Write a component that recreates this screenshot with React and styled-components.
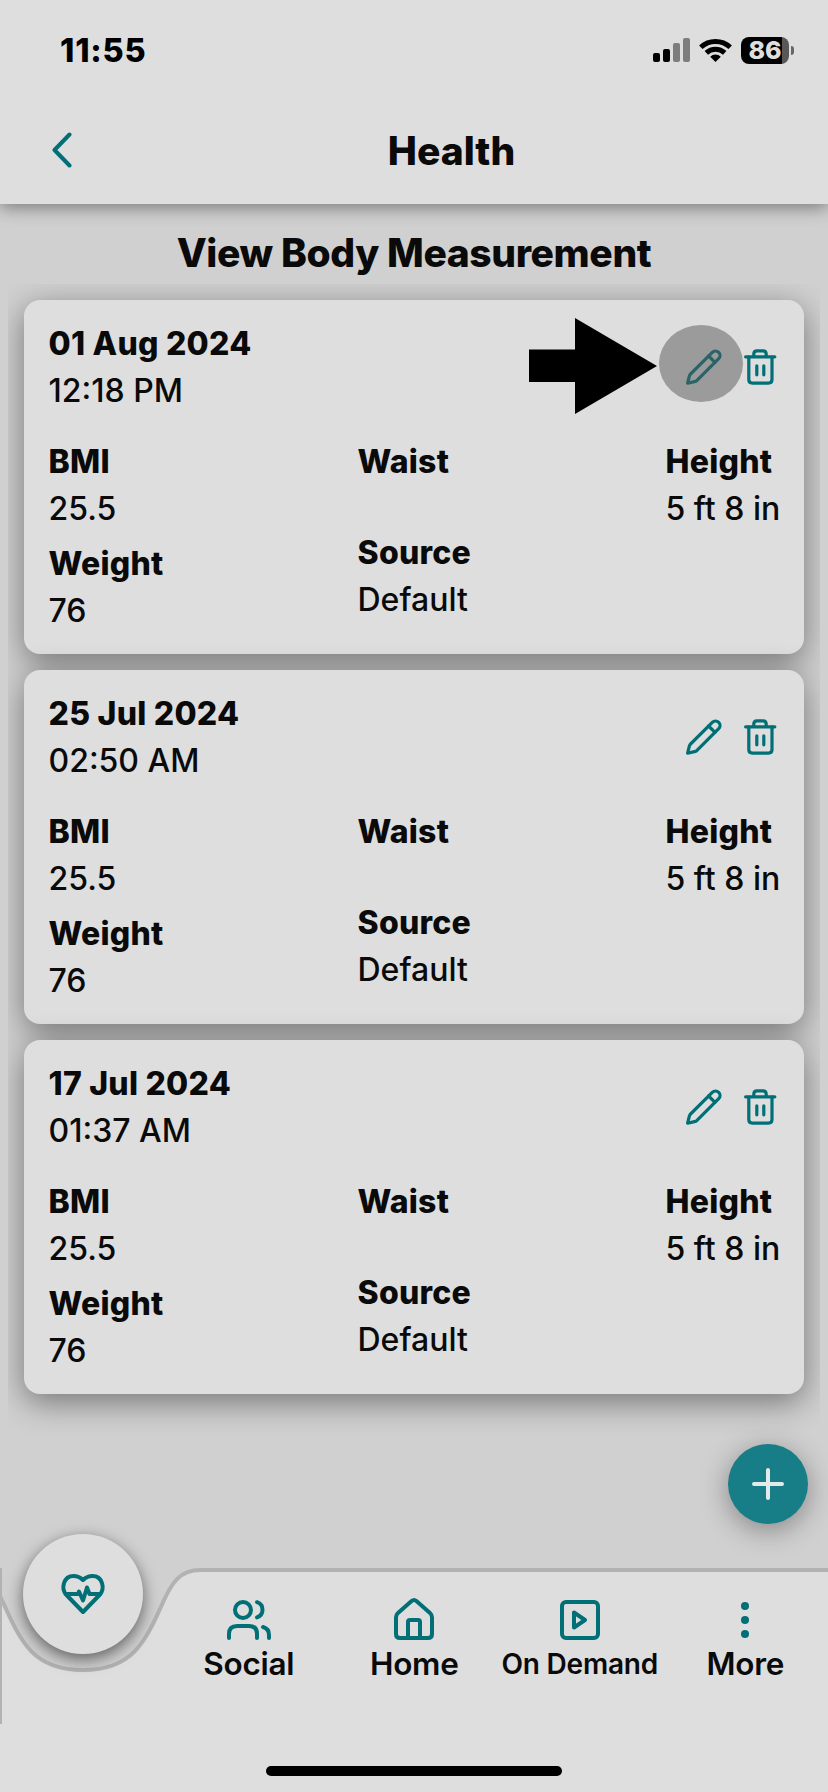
import React from 'react'
import styled, { createGlobalStyle } from 'styled-components'

const teal = '#006f76'

const GlobalStyle = createGlobalStyle`
  * {
    box-sizing: border-box;
  }
  body {
    margin: 0;
    background-color: #d0d0d0;
    color: #0a0a0a;
    font-family: Inter, 'Liberation Sans', sans-serif;
  }
  h1, h2, p {
    margin: 0;
  }
`

const Screen = styled.div`
  display: flex;
  flex-direction: column;
  width: 828px;
  height: 1792px;
  background-color: #d0d0d0;
  overflow: hidden;
  position: relative;
`
const Top = styled.header`
  height: 204px;
  flex: none;
  background-color: #dedede;
  box-shadow: 0 4px 16px rgba(0, 0, 0, 0.4);
`
const StatusBar = styled.div`
  display: flex;
  align-items: center;
  justify-content: space-between;
  height: 100px;
  padding: 0 34px 0 60px;
`
const Time = styled.div`
  font-size: 32.5px;
  font-weight: 800;
  letter-spacing: 0.8px;
  color: #000;
`
const StatusIcons = styled.div`
  display: flex;
  align-items: center;
  gap: 9px;
`
const Battery = styled.div`
  display: flex;
  align-items: center;
  gap: 2px;
`
const Charge = styled.div`
  display: flex;
  align-items: center;
  justify-content: center;
  width: 48px;
  height: 27px;
  border-radius: 8px;
  background: linear-gradient(to right, #000 41px, #585858 41px);
  color: #dedede;
  font-size: 25px;
  font-weight: 800;
  line-height: 27px;
`
const Nub = styled.div`
  width: 3px;
  height: 9px;
  border-radius: 0 4px 4px 0;
  background-color: #666;
`
const TitleBar = styled.div`
  display: grid;
  grid-template-columns: 75px 1fr 0px;
  align-items: center;
  height: 100px;
`
const Back = styled.div`
  display: flex;
  justify-content: flex-end;
`
const Title = styled.h1`
  text-align: center;
  font-size: 39px;
  font-weight: 800;
`
const PageTitle = styled.h2`
  height: 80px;
  flex: none;
  padding-top: 25px;
  text-align: center;
  font-size: 39px;
  line-height: 47px;
  font-weight: 800;
  letter-spacing: -0.4px;
`
const List = styled.div`
  display: flex;
  flex-direction: column;
  gap: 16px;
  flex: none;
  height: 1152px;
  margin: 0 8px;
  padding: 16px;
  overflow: hidden;
`
const Card = styled.div`
  height: 354px;
  flex: none;
  padding: 20px 24px 20px 24.5px;
  border-radius: 16px;
  background-color: #dedede;
  box-shadow: 0 8px 32px rgba(0, 0, 0, 0.44);
`
const CardHead = styled.div`
  display: flex;
  justify-content: space-between;
  height: 118px;
`
const Label = styled.p`
  font-size: 32px;
  line-height: 47px;
  font-weight: 800;
  letter-spacing: 0.25px;
  white-space: nowrap;
`
const Value = styled.p`
  font-size: 32px;
  line-height: 47px;
  font-weight: 500;
  min-height: 36px;
  white-space: nowrap;
`
const Actions = styled.div`
  display: flex;
  gap: 16px;
  height: 40px;
  margin-top: 27px;
`
const Action = styled.div`
  position: relative;
  width: 40px;
  height: 40px;
`
const Stats = styled.div`
  display: grid;
  grid-template-columns: 309px 308px auto;
`
const Column = styled.div`
  display: flex;
  flex-direction: column;
  gap: 8px;
`
// grey spot over the edit button, with the arrow pointing to it
const Spot = styled.div`
  position: absolute;
  left: -25px;
  top: -22px;
  width: 84px;
  height: 77px;
  border-radius: 50%;
  background-color: rgba(88, 88, 88, 0.5);
`
const Pointer = styled.svg`
  position: absolute;
  left: -155px;
  top: -29px;
`
const Icon = styled.svg`
  display: block;
  flex: none;
  fill: none;
  stroke: ${(props) => props.$color || teal};
  stroke-width: ${(props) => props.$weight || 4};
  stroke-linecap: round;
  stroke-linejoin: round;
`
const AddButton = styled.div`
  position: absolute;
  right: 20px;
  top: 1444px;
  display: flex;
  align-items: center;
  justify-content: center;
  width: 80px;
  height: 80px;
  border-radius: 50%;
  background-color: #177d87;
  box-shadow: 0 6px 28px rgba(0, 0, 0, 0.36);
`
const Bottom = styled.footer`
  position: relative;
  display: flex;
  flex-direction: column;
  flex: none;
  height: 224px;
  margin-top: auto;
`
const BarShape = styled.svg`
  position: absolute;
  left: 0;
  top: 0;
`
const HealthButton = styled.div`
  position: absolute;
  left: 23px;
  top: -34px;
  display: flex;
  align-items: center;
  justify-content: center;
  width: 120px;
  height: 120px;
  border-radius: 50%;
  background-color: #dedede;
  box-shadow: 0 5px 16px rgba(0, 0, 0, 0.55);
`
const Nav = styled.nav`
  position: relative;
  display: flex;
  height: 198px;
  padding: 28px 0 0 166px;
`
const NavItem = styled.div`
  display: flex;
  flex: 1;
  flex-direction: column;
  align-items: center;
`
const NavLabel = styled.div`
  font-size: ${(props) => (props.$small ? 28 : 31.5)}px;
  line-height: 40px;
  font-weight: 600;
  letter-spacing: ${(props) => (props.$small ? -0.2 : -0.3)}px;
  white-space: nowrap;
`
const HomeIndicator = styled.div`
  position: relative;
  width: 296px;
  height: 10px;
  margin: 0 auto;
  border-radius: 5px;
  background-color: #000;
`

const Signal = () => (
  <svg width='37' height='24'>
    <rect x='0' y='15' width='7' height='9' rx='2' />
    <rect x='10' y='11' width='7' height='13' rx='2' />
    <rect x='20' y='5' width='7' height='19' rx='2' fill='#7d7d7d' />
    <rect x='30' y='0' width='7' height='24' rx='2' fill='#7d7d7d' />
  </svg>
)

const Wifi = () => (
  <svg width='33' height='24' fill='none' stroke='#000' strokeWidth='5'>
    <path d='M1.8 9.2 A21.5 21.5 0 0 1 31.2 9.2' />
    <path d='M7.3 14.8 A13.5 13.5 0 0 1 25.7 14.8' />
    <path d='M16.5 24 L11.2 18.7 A7.5 7.5 0 0 1 21.8 18.7 Z' fill='#000' stroke='none' />
  </svg>
)

const EditIcon = () => (
  <Icon width='40' height='40' $weight={3.2}>
    <path d='M28.3 5.3 L6.6 27 Q5.8 27.8 5.4 29 L3.6 36.2 L10.4 34.6 Q12 34.2 13 33.4 L34.7 11.7 A4.5 4.5 0 0 0 28.3 5.3 Z' />
    <path d='M24.6 9 L31 15.4' />
  </Icon>
)

const TrashIcon = () => (
  <Icon width='40' height='40' $weight={3.2}>
    <path d='M5.6 9.8 H34.8' />
    <path d='M13.8 9.5 V7 Q13.8 3.8 17 3.8 H23 Q26.2 3.8 26.2 7 V9.5' />
    <path d='M8.8 10 V32.6 Q8.8 36.2 12.4 36.2 H28.4 Q32 36.2 32 32.6 V10' />
    <path d='M16.8 18.8 V27.8 M23.8 18.8 V27.8' />
  </Icon>
)

const UsersIcon = () => (
  <Icon width='48' height='48'>
    <circle cx='18' cy='14' r='8' />
    <path d='M32 6.2 A8 8 0 0 1 32 21.4' />
    <path d='M4 42 V38 Q4 30 12 30 H24 Q32 30 32 38 V42' />
    <path d='M38 31 Q44 32.7 44 39 V42' />
  </Icon>
)

const HomeIcon = () => (
  <Icon width='48' height='48'>
    <path d='M6 38 V21.5 Q6 18.8 8 17 L21.6 5 Q24 3 26.4 5 L40 17 Q42 18.8 42 21.5 V38 Q42 42 38 42 H10 Q6 42 6 38 Z' />
    <path d='M18 42 V26 Q18 24 20 24 H28 Q30 24 30 26 V42' />
  </Icon>
)

const DemandIcon = () => (
  <Icon width='48' height='48'>
    <rect x='6' y='6' width='36' height='36' rx='4' />
    <path d='M18 16.5 V31.5 L29 24 Z' />
  </Icon>
)

const MoreIcon = () => (
  <Icon width='48' height='48'>
    <g fill={teal} stroke='none'>
      <circle cx='24' cy='10' r='4' />
      <circle cx='24' cy='24' r='4' />
      <circle cx='24' cy='38' r='4' />
    </g>
  </Icon>
)

const HeartIcon = () => (
  <Icon width='48' height='48'>
    <path d='M24 42 L7.5 25 C1.5 18.5 4.5 6 14.5 6 C18.5 6 21.5 7.5 24 10 C26.5 7.5 29.5 6 33.5 6 C43.5 6 46.5 18.5 40.5 25 Z' />
    <path d='M6.5 24 H19 L20 21.5 L24 30.5 L28 17.5 L30.5 24 H41.5' />
  </Icon>
)

const records = [
  { date: '01 Aug 2024', time: '12:18 PM', marked: true },
  { date: '25 Jul 2024', time: '02:50 AM' },
  { date: '17 Jul 2024', time: '01:37 AM' },
]

const Record = ({ date, time, marked }) => (
  <Card>
    <CardHead>
      <div>
        <Label>{date}</Label>
        <Value>{time}</Value>
      </div>
      <Actions>
        <Action>
          <EditIcon />
          {marked && (
            <>
              <Spot />
              <Pointer width='128' height='96'>
                <path d='M0 31.5 H46 V0 L128 48 L46 96 V64 H0 Z' />
              </Pointer>
            </>
          )}
        </Action>
        <Action>
          <TrashIcon />
        </Action>
      </Actions>
    </CardHead>
    <Stats>
      <Column>
        <div>
          <Label>BMI</Label>
          <Value>25.5</Value>
        </div>
        <div>
          <Label>Weight</Label>
          <Value>76</Value>
        </div>
      </Column>
      <Column>
        <div>
          <Label>Waist</Label>
          <Value />
        </div>
        <div>
          <Label>Source</Label>
          <Value>Default</Value>
        </div>
      </Column>
      <Column>
        <div>
          <Label>Height</Label>
          <Value>5 ft 8 in</Value>
        </div>
      </Column>
    </Stats>
  </Card>
)

const App = () => {
  return (
    <Screen>
      <GlobalStyle />
      <Top>
        <StatusBar>
          <Time>11:55</Time>
          <StatusIcons>
            <Signal />
            <Wifi />
            <Battery>
              <Charge>86</Charge>
              <Nub />
            </Battery>
          </StatusIcons>
        </StatusBar>
        <TitleBar>
          <Back>
            <Icon width='24' height='36'>
              <path d='M18.5 2.5 L3.5 18 L18.5 33.5' />
            </Icon>
          </Back>
          <Title>Health</Title>
        </TitleBar>
      </Top>
      <PageTitle>View Body Measurement</PageTitle>
      <List>
        {records.map((record) => (
          <Record key={record.date} {...record} />
        ))}
      </List>
      <AddButton>
        <Icon width='36' height='36' $color='#e4e9e9'>
          <path d='M4 18 H32 M18 4 V32' />
        </Icon>
      </AddButton>
      <Bottom>
        <BarShape width='828' height='224'>
          <path
            d='M-34 2 C-14 2 -6 15 2 32 C20 72 32 102 83 102 C134 102 146 72 164 32 C172 15 180 2 200 2 H840 V240 H-34 Z'
            fill='#dedede'
          />
          <path
            d='M-34 2 C-14 2 -6 15 2 32 C20 72 32 102 83 102 C134 102 146 72 164 32 C172 15 180 2 200 2 H840'
            fill='none'
            stroke='#b2b2b2'
            strokeWidth='4'
          />
          <rect width='2' height='156' fill='#b2b2b2' />
        </BarShape>
        <HealthButton>
          <HeartIcon />
        </HealthButton>
        <Nav>
          <NavItem>
            <UsersIcon />
            <NavLabel>Social</NavLabel>
          </NavItem>
          <NavItem>
            <HomeIcon />
            <NavLabel>Home</NavLabel>
          </NavItem>
          <NavItem>
            <DemandIcon />
            <NavLabel $small>On Demand</NavLabel>
          </NavItem>
          <NavItem>
            <MoreIcon />
            <NavLabel>More</NavLabel>
          </NavItem>
        </Nav>
        <HomeIndicator />
      </Bottom>
    </Screen>
  )
}

export default App
